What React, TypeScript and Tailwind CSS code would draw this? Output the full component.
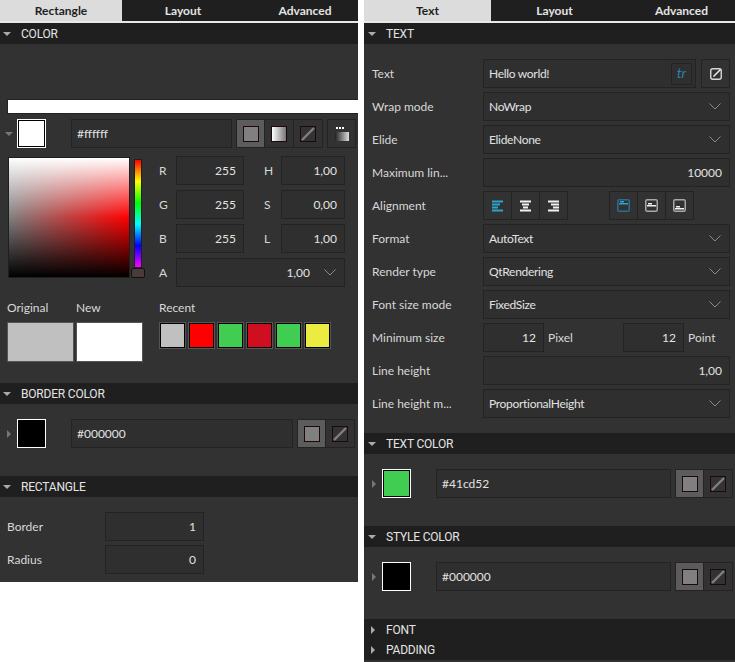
import type { ReactNode } from "react";

const recent = ["bg-[#c0c0c0]", "bg-[#ff0000]", "bg-[#41cd52]", "bg-[#cf0e20]", "bg-[#41cd52]", "bg-[#ebeb40]"];

function Tri({ open, small }: { open?: boolean; small?: boolean }) {
  if (open) {
    return (
      <svg width="8" height="4" viewBox="0 0 8 4" className="block">
        <polygon points="0,0 8,0 4,4" fill={small ? "#777" : "#aaa"} />
      </svg>
    );
  }
  return (
    <svg width="4" height="8" viewBox="0 0 4 8" className="block">
      <polygon points="0,0 4,4 0,8" fill={small ? "#777" : "#aaa"} />
    </svg>
  );
}

function Chevron() {
  return (
    <svg width="12" height="7" viewBox="0 0 12 7" className="shrink-0">
      <polyline points="0.5,0.5 6,6 11.5,0.5" fill="none" stroke="#8a8a8a" strokeWidth="1" />
    </svg>
  );
}

function Header({ title, open = true, className = "" }: { title: string; open?: boolean; className?: string }) {
  return (
    <div className={`flex h-[21px] items-center bg-[#1f1f1f] text-[#e4e4e4] ${className}`}>
      <div className={open ? "w-[21px] pl-[3px]" : "w-[21px] pl-[6px]"}>
        <Tri open={open} />
      </div>
      <span className="font-['Roboto',sans-serif] tracking-[-0.2px]">{title}</span>
    </div>
  );
}

function Tabs({ items, width }: { items: string[]; width: string }) {
  return (
    <div className="flex h-[21px] overflow-hidden bg-[#1f1f1f] font-bold">
      {items.map((t, i) => (
        <div
          key={t}
          className={`flex shrink-0 items-center justify-center ${width} ${i === 0 ? "bg-[#dcdcdc] text-[#1f1f1f]" : "text-[#e4e4e4]"}`}
        >
          {t}
        </div>
      ))}
    </div>
  );
}

function Field({ className = "", children }: { className?: string; children?: ReactNode }) {
  return (
    <div className={`flex h-[29px] items-center border border-[#232323] bg-[#2f2f2f] pl-[5px] pr-[7px] text-[#e2e2e2] ${className}`}>
      {children}
    </div>
  );
}

function Num({ value, className = "" }: { value: string; className?: string }) {
  return <Field className={`justify-end ${className}`}>{value}</Field>;
}

function Combo({ value }: { value: string }) {
  return (
    <Field className="flex-1 justify-between !pr-[8px]">
      <span className="tracking-[-0.3px]">{value}</span>
      <Chevron />
    </Field>
  );
}

function Row({ label, children }: { label: string; children: ReactNode }) {
  return (
    <div className="flex h-[29px] items-center pr-[5px]">
      <div className="w-[118px] shrink-0 pl-[7px] text-[#d8d8d8]">{label}</div>
      {children}
    </div>
  );
}

function Btn({ active, first, className = "", children }: { active?: boolean; first?: boolean; className?: string; children?: ReactNode }) {
  return (
    <div
      className={`flex h-[29px] w-[29px] shrink-0 items-center justify-center border border-[#232323] ${first ? "" : "border-l-0"} ${active ? "bg-[#5c5c5c]" : "bg-[#323232]"} ${className}`}
    >
      {children}
    </div>
  );
}

function SolidIcon() {
  return <div className="size-[16px] border border-[#1f0808] bg-[#808080]" />;
}

function GradientIcon() {
  return <div className="size-[16px] border border-[#1f0808] bg-[linear-gradient(to_right,#ffffff,#777777)]" />;
}

function NoneIcon() {
  return (
    <svg width="16" height="16" viewBox="0 0 16 16">
      <rect x="0.5" y="0.5" width="15" height="15" fill="#333" stroke="#1f0808" />
      <line x1="2" y1="14" x2="14" y2="2" stroke="#808080" strokeWidth="2.4" />
    </svg>
  );
}

function MoreIcon() {
  return (
    <svg width="16" height="16" viewBox="0 0 16 16">
      <defs>
        <linearGradient id="more" x1="0" x2="1" y1="0" y2="0">
          <stop offset="0" stopColor="#222" />
          <stop offset="1" stopColor="#ddd" />
        </linearGradient>
      </defs>
      <rect x="2" y="1" width="2" height="2" fill="#fff" />
      <rect x="5" y="1" width="2" height="2" fill="#fff" />
      <rect x="8" y="1" width="2" height="2" fill="#fff" />
      <rect x="1" y="6" width="14" height="9" fill="url(#more)" />
    </svg>
  );
}

function EditIcon() {
  return (
    <svg width="14" height="14" viewBox="0 0 14 14">
      <rect x="1.75" y="1.75" width="10.5" height="10.5" rx="2" fill="none" stroke="#d8d8d8" strokeWidth="1.4" />
      <path d="M4.5 9.5L11.5 2.5" stroke="#f2f2f2" strokeWidth="1.5" />
    </svg>
  );
}

function AlignIcon({ kind, active }: { kind: "left" | "center" | "right"; active?: boolean }) {
  const c = active ? "#29a5cc" : "#f2f2f2";
  const bars = kind === "left"
    ? [[1, 11], [1, 8], [1, 6], [1, 11]]
    : kind === "center"
      ? [[1, 11], [3, 7], [4, 5], [1, 11]]
      : [[1, 11], [4, 8], [6, 6], [1, 11]];
  return (
    <svg width="13" height="12" viewBox="0 0 13 12">
      {bars.map(([x, w], i) => (
        <rect key={i} x={x} y={i * 3 + 0.5} width={w} height="2" fill={c} />
      ))}
    </svg>
  );
}

function VAlignIcon({ pos, active }: { pos: "top" | "middle" | "bottom"; active?: boolean }) {
  const stroke = active ? "#2b6c93" : "#a8a8a8";
  const bar = active ? "#29a5cc" : "#f2f2f2";
  const y = pos === "top" ? 2 : pos === "middle" ? 4 : 7;
  return (
    <svg width="13" height="13" viewBox="0 0 13 13">
      <rect x="0.75" y="0.75" width="11.5" height="11.5" rx="1.5" fill="none" stroke={stroke} strokeWidth="1.5" />
      <rect x="3" y={y} width="4" height="1.5" fill={bar} />
      <rect x="2" y={y + 2} width="9" height="1.5" fill={bar} />
    </svg>
  );
}

function Swatch({ color }: { color: string }) {
  return (
    <div className="size-[29px] shrink-0 border border-white">
      <div className={`size-full border border-black ${color}`} />
    </div>
  );
}

function ColorRow({ color, hex, open, trailing = "pr-[3px]", children }: { color: string; hex: string; open?: boolean; trailing?: string; children?: ReactNode }) {
  return (
    <div className={`flex h-[29px] items-center ${trailing}`}>
      <div className="flex w-[17px] justify-center">
        <Tri open={open} small />
      </div>
      <Swatch color={color} />
      <Field className="ml-[25px] flex-1 justify-start">{hex}</Field>
      <div className="ml-[4px] flex">{children}</div>
    </div>
  );
}

function SolidNone() {
  return (
    <>
      <Btn first active><SolidIcon /></Btn>
      <Btn><NoneIcon /></Btn>
    </>
  );
}

function RectanglePanel() {
  return (
    <div className="h-[582px] w-[358px] shrink-0 self-start overflow-hidden bg-[#323232]">
      <Tabs items={["Rectangle", "Layout", "Advanced"]} width="w-[122px]" />
      <div className="h-[2px] bg-[#e8e8e8]" />
      <Header title="COLOR" />

      <div className="pt-[55px] pb-[21px]">
        <div className="ml-[7px] h-[15px] border border-r-0 border-[#222222] bg-white" />
        <div className="mt-[5px]">
          <ColorRow color="bg-white" hex="#ffffff" open trailing="pr-[2px]">
            <Btn first active><SolidIcon /></Btn>
            <Btn><GradientIcon /></Btn>
            <Btn><NoneIcon /></Btn>
            <Btn first className="ml-[4px]"><MoreIcon /></Btn>
          </ColorRow>
        </div>

        <div className="mt-[8px] flex pl-[8px]">
          <div className="mt-[1px] h-[121px] w-[122px] border border-[#1f1f1f] bg-[linear-gradient(to_bottom,#ffffff,transparent_50%,#000000),linear-gradient(to_right,#808080,#ff0000)]" />
          <div className="ml-px mt-[3px] flex w-[14px] flex-col items-center">
            <div className="h-[109px] w-[8px] border border-[#1f1f1f] bg-[linear-gradient(to_bottom,#ff0000,#ffff00,#00ff00,#00ffff,#0000ff,#ff00ff)]" />
            <div className="h-[10px] w-[14px] rounded-[2px] border border-[#111111] bg-[#4a3a3a]" />
          </div>
          <div className="ml-[14px] flex flex-col gap-[5px]">
            {[["R", "255", "H", "1,00"], ["G", "255", "S", "0,00"], ["B", "255", "L", "1,00"]].map(([a, b, c, d]) => (
              <div key={a} className="flex h-[29px] items-center text-[#d8d8d8]">
                <span className="w-[17px]">{a}</span>
                <Num value={b} className="w-[68px]" />
                <span className="ml-[20px] w-[17px]">{c}</span>
                <Num value={d} className="w-[64px]" />
              </div>
            ))}
            <div className="flex h-[29px] items-center text-[#d8d8d8]">
              <span className="w-[17px]">A</span>
              <Field className="w-[169px] justify-end !pr-[8px]">
                <span className="mr-[14px]">1,00</span>
                <Chevron />
              </Field>
            </div>
          </div>
        </div>

        <div className="mt-[12px] flex pl-[7px] text-[#d8d8d8]">
          <div className="w-[67px]">
            <div className="h-[23px]">Original</div>
            <div className="h-[40px] border border-[#555555] bg-[#c0c0c0]" />
          </div>
          <div className="ml-[2px] w-[67px]">
            <div className="h-[23px]">New</div>
            <div className="h-[40px] border border-[#555555] bg-white" />
          </div>
          <div className="ml-[16px]">
            <div className="h-[23px]">Recent</div>
            <div className="flex gap-[2px]">
              {recent.map((c, i) => (
                <div key={i} className="size-[27px] border border-[#555555]">
                  <div className={`size-full border border-black ${c}`} />
                </div>
              ))}
            </div>
          </div>
        </div>
      </div>

      <Header title="BORDER COLOR" />
      <div className="pt-[15px] pb-[28px]">
        <ColorRow color="bg-black" hex="#000000"><SolidNone /></ColorRow>
      </div>

      <Header title="RECTANGLE" />
      <div className="flex flex-col gap-[4px] pt-[15px]">
        {[["Border", "1"], ["Radius", "0"]].map(([l, v]) => (
          <div key={l} className="flex h-[29px] items-center">
            <span className="w-[105px] pl-[7px] text-[#d8d8d8]">{l}</span>
            <Num value={v} className="w-[99px]" />
          </div>
        ))}
      </div>
    </div>
  );
}

function TextPanel() {
  return (
    <div className="h-[662px] w-[371px] shrink-0 self-start overflow-hidden bg-[#323232]">
      <Tabs items={["Text", "Layout", "Advanced"]} width="w-[127px]" />
      <div className="h-[2px] bg-[#e8e8e8]" />
      <Header title="TEXT" className="pl-px" />

      <div className="flex flex-col gap-[4px] py-[15px] pl-px">
        <Row label="Text">
          <Field className="flex-1 justify-between !pr-[3px]">
            <span className="tracking-[-0.3px]">Hello world!</span>
            <div className="flex h-[22px] w-[21px] items-center justify-center border border-[#232323] text-[13px] italic text-[#2b86b3]">tr</div>
          </Field>
          <Btn first className="ml-[5px]"><EditIcon /></Btn>
        </Row>
        <Row label="Wrap mode"><Combo value="NoWrap" /></Row>
        <Row label="Elide"><Combo value="ElideNone" /></Row>
        <Row label="Maximum lin..."><Num value="10000" className="flex-1" /></Row>
        <Row label="Alignment">
          <div className="flex">
            <Btn first><AlignIcon kind="left" active /></Btn>
            <Btn className="!w-[28px]"><AlignIcon kind="center" /></Btn>
            <Btn className="!w-[28px]"><AlignIcon kind="right" /></Btn>
          </div>
          <div className="ml-[41px] flex">
            <Btn first><VAlignIcon pos="top" active /></Btn>
            <Btn className="!w-[28px]"><VAlignIcon pos="middle" /></Btn>
            <Btn className="!w-[28px]"><VAlignIcon pos="bottom" /></Btn>
          </div>
        </Row>
        <Row label="Format"><Combo value="AutoText" /></Row>
        <Row label="Render type"><Combo value="QtRendering" /></Row>
        <Row label="Font size mode"><Combo value="FixedSize" /></Row>
        <Row label="Minimum size">
          <Num value="12" className="w-[61px]" />
          <span className="ml-[4px] w-[75px] text-[#d8d8d8]">Pixel</span>
          <Num value="12" className="w-[61px]" />
          <span className="ml-[4px] text-[#d8d8d8]">Point</span>
        </Row>
        <Row label="Line height"><Num value="1,00" className="flex-1" /></Row>
        <Row label="Line height m..."><Combo value="ProportionalHeight" /></Row>
      </div>

      <Header title="TEXT COLOR" className="pl-px" />
      <div className="pt-[15px] pb-[28px] pl-px">
        <ColorRow color="bg-[#41cd52]" hex="#41cd52" trailing="pr-[2px]"><SolidNone /></ColorRow>
      </div>

      <Header title="STYLE COLOR" className="pl-px" />
      <div className="pt-[15px] pb-[28px] pl-px">
        <ColorRow color="bg-black" hex="#000000" trailing="pr-[2px]"><SolidNone /></ColorRow>
      </div>

      <Header title="FONT" open={false} className="pl-px" />
      <Header title="PADDING" open={false} className="-mt-px pl-px" />
    </div>
  );
}

export default function App() {
  return (
    <div className="flex h-[662px] w-[735px] gap-[6px] overflow-hidden bg-white font-['Lato',sans-serif] text-[12px]">
      <RectanglePanel />
      <TextPanel />
    </div>
  );
}
